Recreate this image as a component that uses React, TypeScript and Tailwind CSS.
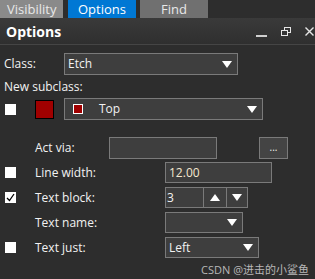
import React from 'react';

const Arrow: React.FC<{ up?: boolean }> = ({ up }) => (
  <svg width="10" height="7" viewBox="0 0 10 7" className="block">
    <path d={up ? 'M0 7H10L5 0Z' : 'M0 0H10L5 7Z'} fill="#ffffff" />
  </svg>
);

const Check: React.FC<{ checked?: boolean }> = ({ checked }) => (
  <div className="w-[11px] h-[11px] bg-white flex items-center justify-center">
    {checked && (
      <svg width="9" height="9" viewBox="0 0 9 9">
        <path d="M1 5L3.5 7.5L8 1" stroke="#000" strokeWidth="1.3" fill="none" />
      </svg>
    )}
  </div>
);

const Field: React.FC<{ w: string; h?: string; children?: React.ReactNode; arrow?: boolean }> = ({ w, h = 'h-[21px]', children, arrow }) => (
  <div className={`${w} ${h} border border-[#7a7a7a] bg-[#3e3e3e] flex items-center pl-[3px] pr-[5px]`}>
    <div className="flex-1 flex items-center">{children}</div>
    {arrow && <Arrow />}
  </div>
);

const App: React.FC = () => {
  return (
    <main className="w-[315px] h-[279px] bg-[#2d2d2d] text-[#f2f2f2] overflow-hidden" style={{ fontFamily: '"Open Sans", "Noto Sans CJK SC", sans-serif' }}>
      {/* tabs */}
      <div className="flex h-[18px] text-[13px] leading-[18px] text-[#e8e8e8]">
        <div className="w-[63px] bg-[#8a8a8a] pl-[7px]">Visibility</div>
        <div className="w-[68px] ml-[5px] bg-[#0078d4] text-center text-white">Options</div>
        <div className="w-[68px] ml-[4px] bg-[#707070] text-center">Find</div>
      </div>

      {/* title bar */}
      <div className="h-[27px] bg-gradient-to-b from-[#3a3a3a] to-[#2f2f2f] flex items-center pl-[6px] pr-[1px] border-b border-[#454545]">
        <div className="font-bold text-[14px] text-white flex-1">Options</div>
        <div className="w-[11px] h-[2px] bg-[#cfcfcf] mt-[9px] mr-[14px]" />
        <svg width="10" height="9" viewBox="0 0 10 9" className="mr-[14px]">
          <rect x="3.5" y="0.5" width="6" height="5" fill="none" stroke="#e6e6e6" />
          <rect x="0.5" y="3.5" width="6" height="5" fill="#333" stroke="#e6e6e6" />
        </svg>
        <svg width="9" height="9" viewBox="0 0 9 9">
          <path d="M0.5 0.5L8.5 8.5M8.5 0.5L0.5 8.5" stroke="#e6e6e6" strokeWidth="1.4" />
        </svg>
      </div>

      <div className="text-[12px] leading-none">
        {/* class */}
        <div className="flex items-center mt-[8px] h-[22px]">
          <div className="w-[64px] pl-[4px]">Class:</div>
          <Field w="w-[174px]" h="h-[22px]" arrow>Etch</Field>
        </div>

        <div className="h-[23px] pl-[4px] flex items-center">New subclass:</div>

        {/* subclass */}
        <div className="flex items-center h-[22px]">
          <div className="w-[35px] pl-[5px]"><Check /></div>
          <div className="w-[29px]">
            <div className="w-[19px] h-[19px] border border-black bg-[#a00000]" />
          </div>
          <Field w="w-[199px]" h="h-[22px]" arrow>
            <div className="w-[10px] h-[10px] border border-white bg-[#a00000] ml-[5px] mr-[16px]" />
            Top
          </Field>
        </div>

        {/* act via */}
        <div className="flex items-center mt-[17px] h-[22px]">
          <div className="w-[109px] pl-[35px] whitespace-nowrap">Act via:</div>
          <Field w="w-[108px]" h="h-[22px]" />
          <div className="ml-[42px] w-[29px] h-[22px] border border-[#7a7a7a] bg-[#444] flex items-end justify-center pb-[6px] text-[10px]">...</div>
        </div>

        {/* line width */}
        <div className="flex items-center mt-[3px] h-[21px]">
          <div className="w-[35px] pl-[5px]"><Check /></div>
          <div className="w-[130px]">Line width:</div>
          <Field w="w-[107px]"><span className="text-[#f5e8d0]">12.00</span></Field>
        </div>

        {/* text block */}
        <div className="flex items-center mt-[4px] h-[21px]">
          <div className="w-[35px] pl-[5px]"><Check checked /></div>
          <div className="w-[130px]">Text block:</div>
          <div className="flex h-[21px] border border-[#7a7a7a] bg-[#3e3e3e]">
            <div className="w-[37px] pl-[1px] flex items-center">3</div>
            <div className="w-[23px] border-l border-[#7a7a7a] flex items-center justify-center"><Arrow up /></div>
            <div className="w-[21px] border-l border-[#7a7a7a] flex items-center justify-center"><Arrow /></div>
          </div>
        </div>

        {/* text name */}
        <div className="flex items-center mt-[4px] h-[21px]">
          <div className="w-[165px] pl-[35px]">Text name:</div>
          <Field w="w-[78px]" arrow />
        </div>

        {/* text just */}
        <div className="flex items-center mt-[4px] h-[21px]">
          <div className="w-[35px] pl-[5px]"><Check /></div>
          <div className="w-[130px]">Text just:</div>
          <Field w="w-[94px]" arrow>Left</Field>
        </div>

        <div className="mt-[6px] pr-[6px] text-right text-[11px] text-[#b8b8b8]">CSDN @进击的小鲨鱼</div>
      </div>
    </main>
  );
};

export default App;
